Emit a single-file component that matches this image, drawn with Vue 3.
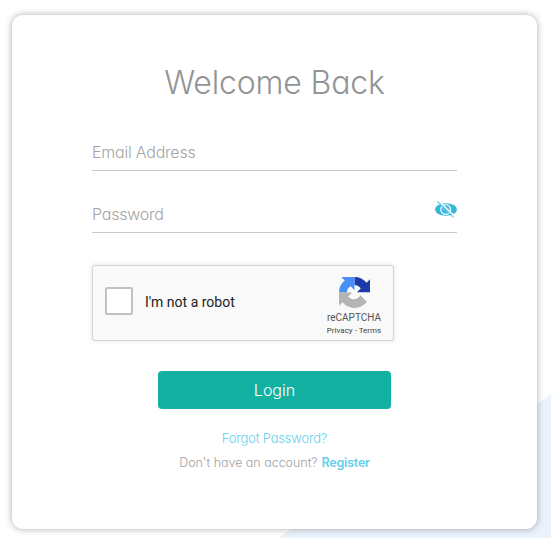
<script setup>
import { ref } from 'vue'

const email = ref('')
const password = ref('')
</script>

<template>
  <main class="page">
    <svg class="backdrop" viewBox="0 0 551 538" aria-hidden="true">
      <path d="M278 538 L292 528.500 L450 464 L537 404 L551 394 V538 Z" fill="#eaf2fc" />
    </svg>
    <section class="card">
      <h1 class="title">Welcome Back</h1>
      <form class="form" @submit.prevent>
        <label class="field">
          <input v-model="email" class="input" type="text" placeholder="Email Address" />
        </label>
        <label class="field second">
          <input v-model="password" class="input" type="password" placeholder="Password" />
          <svg class="eye" width="24" height="20" viewBox="0 0 24 20">
            <ellipse cx="13" cy="10.500" rx="11" ry="6.200" fill="#37b6dc" />
            <circle cx="12.700" cy="10.500" r="4.900" fill="#45bbdf" stroke="#e4f6fb" stroke-width="1.300" />
            <path d="M6 2.500 L21.500 17" stroke="#fff" stroke-width="1.400" />
            <path d="M4.500 2.500 L20.500 18.300" stroke="#62c6e3" stroke-width="1.100" />
          </svg>
        </label>
        <div class="captcha">
          <span class="checkbox"></span>
          <span class="robot">I'm not a robot</span>
          <div class="brand">
            <svg width="31" height="31" viewBox="0 0 64 64">
              <path d="M64 32 V4.600 l-7.200 7.200 A32 32 0 0 0 32 0 V16.400 A15 15 0 0 1 44.800 23.800 L37 31.600 H64Z" fill="#1c3aa9" />
              <path d="M32 0 H4.600 l7.200 7.200 A32 32 0 0 0 0 32 H16.400 A15 15 0 0 1 23.800 19.200 L32 27.400Z" fill="#4a8ff5" />
              <path d="M0 32 V59.400 l7.200-7.200 A32 32 0 0 0 57.500 51.200 L44.200 37.800 A15 15 0 0 1 19.200 40.200 L27.400 32Z" fill="#b4b4b4" />
            </svg>
            <span class="name">reCAPTCHA</span>
            <span class="legal">Privacy - Terms</span>
          </div>
        </div>
        <button class="login" type="submit">Login</button>
      </form>
      <a class="forgot">Forgot Password?</a>
      <p class="signup"><span class="ask">Don't have an account?</span><a class="register">Register</a></p>
    </section>
  </main>
</template>

<style>
body {
  background: #fff;
  overflow: hidden;
}
</style>

<style scoped>
.page {
  position: relative;
  box-sizing: border-box;
  width: 551px;
  height: 538px;
  padding: 15px 14px 9px 12px;
  font-family: Inter, "Liberation Sans", sans-serif;
  font-weight: 300;
  font-feature-settings: "cv11" 1;
}
.backdrop {
  position: absolute;
  inset: 0;
  width: 551px;
  height: 538px;
}
.card {
  position: relative;
  box-sizing: border-box;
  width: 525px;
  height: 514px;
  padding: 43px 80px 0;
  border-radius: 11px;
  background: #fff;
  box-shadow: 0 0 7px rgba(0, 0, 0, 0.33);
  display: flex;
  flex-direction: column;
  align-items: center;
}
.title {
  margin: 0;
  height: 49px;
  font-size: 32px;
  line-height: 50px;
  font-weight: 300;
  letter-spacing: -0.15px;
  color: #929496;
  white-space: nowrap;
}
.form {
  width: 365px;
  display: flex;
  flex-direction: column;
}
.field {
  box-sizing: border-box;
  height: 39px;
  margin-top: 25px;
  border-bottom: 1px solid #c9c9c9;
  display: flex;
  align-items: center;
}
.field.second {
  margin-top: 23px;
}
.input {
  flex: 1;
  min-width: 0;
  height: 38px;
  padding: 1px 0 0;
  border: 0;
  outline: 0;
  background: none;
  font: inherit;
  font-feature-settings: inherit;
  font-size: 16px;
  letter-spacing: -0.22px;
}
.input::placeholder {
  color: #a5a3a3;
  opacity: 1;
}
.eye {
  margin-bottom: 8px;
  flex: none;
}
.captcha {
  box-sizing: border-box;
  width: 302px;
  height: 76px;
  margin-top: 32px;
  padding-left: 12px;
  border: 1px solid #d3d3d3;
  border-radius: 3px;
  background: #f9f9f9;
  box-shadow: 0 0 4px 1px rgba(0, 0, 0, 0.08);
  display: flex;
  align-items: center;
  font-family: Roboto, sans-serif;
  font-weight: 400;
}
.checkbox {
  box-sizing: border-box;
  width: 28px;
  height: 28px;
  margin-bottom: 4px;
  border: 2px solid #c1c1c1;
  border-radius: 2px;
  background: #fff;
}
.robot {
  margin: 0 0 2px 12px;
  font-size: 14px;
  line-height: 17px;
  color: #222;
}
.brand {
  width: 70px;
  height: 74px;
  margin-left: auto;
  margin-right: 4px;
  padding-top: 11px;
  box-sizing: border-box;
  display: flex;
  flex-direction: column;
  align-items: center;
}
.name {
  margin-top: 4px;
  font-size: 10px;
  line-height: 12px;
  color: #555;
}
.legal {
  margin-top: 2px;
  font-size: 8px;
  line-height: 10px;
  color: #444;
  white-space: nowrap;
}
.login {
  width: 233px;
  height: 38px;
  margin: 30px 0 0 66px;
  padding: 0;
  border: 0;
  border-radius: 4px;
  background: #13b1a2;
  color: #fff;
  font: inherit;
  font-feature-settings: inherit;
  font-size: 16px;
  line-height: 38px;
}
.forgot {
  margin-top: 19px;
  font-size: 13px;
  line-height: 20px;
  color: #65cfee;
  letter-spacing: -0.2px;
}
.signup {
  margin: 5px 0 0;
  display: flex;
  gap: 4px;
  font-size: 12.500px;
  line-height: 20px;
  color: #a1a1a4;
  white-space: nowrap;
}
.ask {
  letter-spacing: -0.03px;
}
.register {
  color: #65cfee;
  font-weight: 600;
  letter-spacing: -0.22px;
}
</style>
